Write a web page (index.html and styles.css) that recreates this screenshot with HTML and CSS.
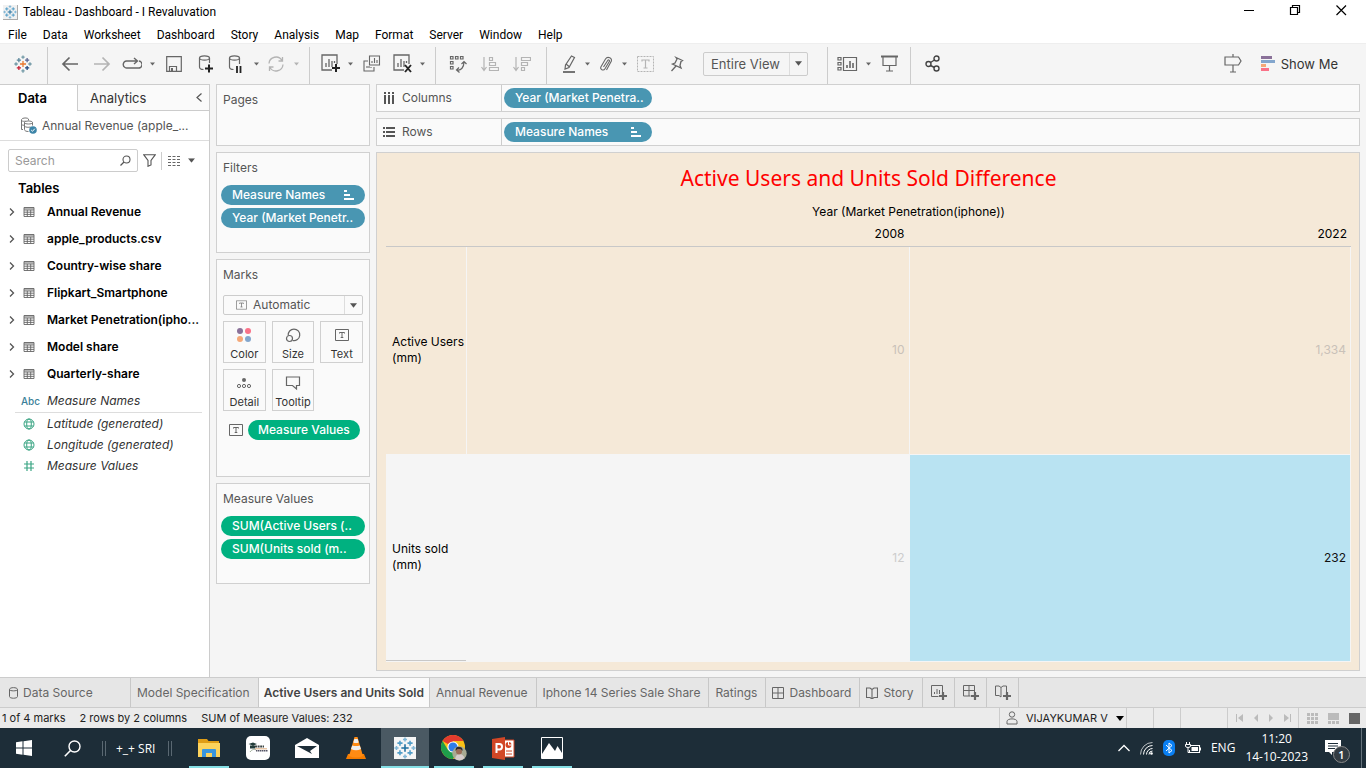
FILE: index.html
```html
<!DOCTYPE html>
<html lang="en">
<head>
<meta charset="utf-8">
<title>Tableau - Dashboard - I Revaluvation</title>
<link rel="stylesheet" href="styles.css">
</head>
<body>
<svg class="sprite" aria-hidden="true">
  <symbol id="caret" viewBox="0 0 8 5"><path d="M0 0h8L4 5z" fill="currentColor"/></symbol>
  <symbol id="logo" viewBox="0 0 24 24"><g fill="none" stroke-width="1.700">
    <path class="lg-a" d="M12 8v8M8 12h8"/>
    <path class="lg-b" d="M6.500 4v5.500M3.700 6.700h5.600"/><path class="lg-c" d="M17.500 4v5.500M14.700 6.700h5.600"/>
    <path class="lg-d" d="M6.500 14.500V20M3.700 17.300h5.600"/><path class="lg-e" d="M17.500 14.500V20M14.700 17.300h5.600"/>
    <path class="lg-f" d="M12 .5v4.500M9.800 2.700h4.400"/><path class="lg-g" d="M12 19v4.500M9.800 21.300h4.400"/>
    <path class="lg-h" d="M2.700 9.800v4.400M.5 12H5"/><path class="lg-i" d="M21.300 9.800v4.400M19 12h4.500"/></g></symbol>
  <symbol id="plus" viewBox="0 0 8 8"><path d="M4 0v8M0 4h8" stroke="currentColor" stroke-width="2.200"/></symbol>
  <symbol id="tbl" viewBox="0 0 12 12"><path d="M1 1.500h10v9H1zM1 4h10M1 6.200h10M1 8.400h10M4.300 4v6.500M7.700 4v6.500" fill="none" stroke="currentColor" stroke-width=".9"/><path d="M1 1.500h10v2H1z" fill="currentColor" opacity=".5"/></symbol>
  <symbol id="chev" viewBox="0 0 6 8"><path d="M1 .5 4.500 4 1 7.500" fill="none" stroke="currentColor" stroke-width="1.300"/></symbol>
  <symbol id="globe" viewBox="0 0 12 12"><g fill="none" stroke="currentColor"><circle cx="6" cy="6" r="5"/><ellipse cx="6" cy="6" rx="2.300" ry="5"/><path d="M1.500 4h9M1.500 8h9"/></g></symbol>
  <symbol id="tbox" viewBox="0 0 14 12"><path d="M.5.5h13v11H.5z" fill="none" stroke="currentColor"/><path d="M4.500 4.500V3.500h5v1M7 3.500v5M5.700 8.500h2.600" fill="none" stroke="currentColor"/></symbol>
  <symbol id="sort" viewBox="0 0 10 10"><path d="M0 0h3v2H0zM0 4h6v2H0zM0 8h10v2H0z" fill="currentColor"/></symbol>
  <symbol id="sheet" viewBox="0 0 18 18"><path d="M11 16H1V1h15v9M5 13v-4M8 13V5M11 13V7M13.500 9V7" fill="none" stroke="currentColor" stroke-width="1.300"/></symbol>
  <symbol id="grid4" viewBox="0 0 12 12"><path d="M.5.5h11v11H.5zM6 .5v11M.5 6h11" fill="none" stroke="currentColor"/></symbol>
  <symbol id="book" viewBox="0 0 12 12"><path d="M6 2.500 4 1H.5v9.500H4L6 12l2-1.500h3.500V1H8L6 2.500V12" fill="none" stroke="currentColor" stroke-width="1.100"/></symbol>
</svg>

<header class="titlebar">
  <svg class="app-logo logo-blue" viewBox="0 0 24 24"><use href="#logo"/></svg>
  <h1 class="window-title">Tableau - Dashboard - I Revaluvation</h1>
  <div class="window-controls">
    <button aria-label="Minimize"><svg width="12" height="12" viewBox="0 0 12 12"><path d="M1 6.500h10" stroke="#000"/></svg></button>
    <button aria-label="Restore"><svg width="12" height="12" viewBox="0 0 12 12"><path d="M3.500 3V1.500h7v7H9M1.500 3.500h7v7h-7z" fill="none" stroke="#000" stroke-width="1.200"/></svg></button>
    <button aria-label="Close"><svg width="12" height="12" viewBox="0 0 12 12"><path d="m1.500 1.500 9.500 9.500M11 1.500 1.500 11" stroke="#000" stroke-width="1.200"/></svg></button>
  </div>
</header>
<nav class="menubar">
  <button>File</button><button>Data</button><button>Worksheet</button><button>Dashboard</button><button>Story</button><button>Analysis</button><button>Map</button><button>Format</button><button>Server</button><button>Window</button><button>Help</button>
</nav>

<div class="toolbar" role="toolbar" aria-label="Main toolbar">
  <div class="group group-start"><button class="tool" aria-label="Start page"><svg class="logo-multi" width="18" height="18" viewBox="0 0 24 24"><use href="#logo"/></svg></button></div>
  <div class="group">
    <button class="tool" aria-label="Undo"><svg width="18" height="16" viewBox="0 0 18 16"><path d="M17 8H2M8.500 1.500 2 8l6.500 6.500" fill="none" stroke="#666" stroke-width="1.700"/></svg></button>
    <button class="tool off" aria-label="Redo"><svg width="18" height="16" viewBox="0 0 18 16"><path d="M1 8h15M9.500 1.500 16 8l-6.500 6.500" fill="none" stroke="currentColor" stroke-width="1.700"/></svg></button>
    <button class="tool split" aria-label="Replay"><svg width="20" height="14" viewBox="0 0 20 14"><path d="M3 10.500A3.500 3.500 0 0 1 4.500 4H15M12 1l3.500 3L12 7M17 4a3.500 3.500 0 0 1-1 7H5a3 3 0 0 1-2-.5" fill="none" stroke="currentColor" stroke-width="1.400"/></svg></button><button class="drop" aria-label="Replay options"><svg><use href="#caret"/></svg></button>
    <button class="tool" aria-label="Save"><svg width="16" height="16" viewBox="0 0 16 16"><path d="M.7.7h14.600v14.600H.7zM3.500 15v-4.500h7V15" fill="none" stroke="currentColor" stroke-width="1.200"/><path d="M5 12h2v3H5z" fill="currentColor"/></svg></button>
    <button class="tool" aria-label="New data source"><svg width="16" height="18" viewBox="0 0 16 18"><g fill="none" stroke="currentColor" stroke-width="1.200"><ellipse cx="6.500" cy="3" rx="5" ry="2.200"/><path d="M1.500 3v9c0 1.500 2 2.500 4 2.500M11.500 3v5"/></g><path d="M11 9.500v8M7 13.500h8" stroke="#222" stroke-width="2"/></svg></button>
    <button class="tool split" aria-label="Pause updates"><svg width="16" height="18" viewBox="0 0 16 18"><g fill="none" stroke="currentColor" stroke-width="1.200"><ellipse cx="6.500" cy="3" rx="5" ry="2.200"/><path d="M1.500 3v9c0 1.500 2 2.500 4 2.500M11.500 3v6"/></g><path d="M9 11v7M12.500 11v7" stroke="#222" stroke-width="1.800"/></svg></button><button class="drop" aria-label="Pause options"><svg><use href="#caret"/></svg></button>
    <button class="tool split off" aria-label="Refresh"><svg width="18" height="16" viewBox="0 0 18 16"><path d="M2 7.500a7 7 0 0 1 13-3M16 8.500a7 7 0 0 1-13 3M15.500 1v4h-4M2.500 15v-4h4" fill="none" stroke="currentColor" stroke-width="1.300"/></svg></button><button class="drop off" aria-label="Refresh options"><svg><use href="#caret"/></svg></button>
  </div>
  <div class="group">
    <button class="tool split" aria-label="New worksheet"><svg width="19" height="19" viewBox="0 0 19 19"><use href="#sheet" width="18" height="18"/><path d="M15 10v8M11 14h8" stroke="#222" stroke-width="2"/></svg></button><button class="drop" aria-label="New worksheet options"><svg><use href="#caret"/></svg></button>
    <button class="tool" aria-label="Duplicate"><svg width="18" height="17" viewBox="0 0 18 17"><path d="M6.500 1h10v9h-10zM5 6H1v10h10v-4M9 8V6M11.500 8V3M14 8V5M4 13v-2M6 13v-2M8 13v-1" fill="none" stroke="currentColor" stroke-width="1.100"/></svg></button>
    <button class="tool split" aria-label="Clear sheet"><svg width="19" height="19" viewBox="0 0 19 19"><use href="#sheet" width="18" height="18"/><path d="m12 11 6 7M18 11l-6 7" stroke="#222" stroke-width="1.900"/></svg></button><button class="drop" aria-label="Clear options"><svg><use href="#caret"/></svg></button>
  </div>
  <div class="group group-sort">
    <button class="tool" aria-label="Swap rows and columns"><svg width="18" height="18" viewBox="0 0 18 18"><path d="M1.500 1.500h2.500V4H1.500zM6.500 1.500H9V4H6.500zM11.500 1.500H14V4h-2.500zM1.500 6.500h2.500V9H1.500zM1.500 11.500h2.500V14H1.500zM8 15c4 1 7-3 7-8M12.500 9 15 6.500 17.500 9M10 12.500 7.500 15l3 2.500" fill="none" stroke="currentColor" stroke-width="1.200"/></svg></button>
    <button class="tool off" aria-label="Sort ascending"><svg width="18" height="16" viewBox="0 0 18 16"><path d="M3 1v13M.5 11 3 14.500 5.500 11M8.500 1.500h3v3h-3zM8.500 6.500h6v3h-6zM8.500 11.500h9v3h-9z" fill="none" stroke="currentColor" stroke-width="1.200"/></svg></button>
    <button class="tool off" aria-label="Sort descending"><svg width="18" height="16" viewBox="0 0 18 16"><path d="M3 1v13M.5 11 3 14.500 5.500 11M8.500 1.500h9v3h-9zM8.500 6.500h6v3h-6zM8.500 11.500h3v3h-3z" fill="none" stroke="currentColor" stroke-width="1.200"/></svg></button>
  </div>
  <div class="group group-format">
    <button class="tool split" aria-label="Highlight"><svg width="14" height="18" viewBox="0 0 14 18"><path d="m9.500 1 3 1.500L7 12.500l-4 1.500.5-4zM4 9l3 2.500" fill="none" stroke="currentColor" stroke-width="1.200"/><path d="M1 17h12" stroke="currentColor" stroke-width="1.800"/></svg></button><button class="drop" aria-label="Highlight options"><svg><use href="#caret"/></svg></button>
    <button class="tool split" aria-label="Group members"><svg width="14" height="16" viewBox="0 0 14 16"><path d="M4.500 11 8.700 4.500c.8-1.200 2.300-.2 1.600 1L6 12.700c-1.500 2.500-5.500.8-4-2L6.500 3c2-3.300 7.500-1 5.500 2.800L7.500 14" fill="none" stroke="currentColor" stroke-width="1.100"/></svg></button><button class="drop" aria-label="Group options"><svg><use href="#caret"/></svg></button>
    <button class="tool off" aria-label="Show mark labels"><svg width="17" height="16" viewBox="0 0 17 16"><path d="M.5.5h16v15H.5z" fill="none" stroke="currentColor" stroke-dasharray="2 1"/><path d="M5 5.500V4h7v1.500M8.500 4v8M6.500 12h4" fill="none" stroke="currentColor" stroke-width="1.200"/></svg></button>
    <button class="tool" aria-label="Fix axes"><svg width="14" height="16" viewBox="0 0 14 16"><path d="m6 1.500 6.500 3-1.500 1L10 9.500l1 2.500-8.500-4L5 7l2-4zM6 10l-4.500 5" fill="none" stroke="currentColor" stroke-width="1.300"/></svg></button>
    <label class="picker picker-fit"><select aria-label="Fit"><option>Entire View</option></select><svg class="picker-caret"><use href="#caret"/></svg></label>
  </div>
  <div class="group group-cards">
    <button class="tool split" aria-label="Show or hide cards"><svg width="21" height="16" viewBox="0 0 21 16"><path d="M1 1.500h3V4H1zM1 6.500h3V9H1zM1 11.500h3V14H1zM6.500 1.500h13v13h-13z" fill="none" stroke="currentColor" stroke-width="1.200"/><path d="M10 12V9M13 12V5M16 12V7" stroke="currentColor" stroke-width="1.600"/></svg></button><button class="drop" aria-label="Card options"><svg><use href="#caret"/></svg></button>
    <button class="tool split" aria-label="Presentation mode"><svg width="17" height="17" viewBox="0 0 17 17"><path d="M0 1.500h17" stroke="currentColor" stroke-width="2"/><path d="M2 2v8.500h13V2M8.500 10.500V16M5 16h7" fill="none" stroke="currentColor" stroke-width="1.200"/></svg></button>
  </div>
  <div class="group">
    <button class="tool" aria-label="Share"><svg width="16" height="17" viewBox="0 0 16 17"><g fill="none" stroke="#444" stroke-width="1.400"><circle cx="3.500" cy="9" r="2.500"/><circle cx="11.500" cy="3.500" r="2.500"/><circle cx="11.500" cy="13.500" r="2.500"/><path d="m5.500 7.500 4-2.500M5.500 10.500l4 2"/></g></svg></button>
  </div>
  <div class="group group-end">
    <button class="tool" aria-label="Guide"><svg width="18" height="19" viewBox="0 0 18 19"><path d="M9 0v3M9 11v7M6 18h6M1 3h13.500L17 7l-2.500 4H1z" fill="none" stroke="#666" stroke-width="1.200"/></svg></button>
    <button class="showme"><svg width="15" height="15" viewBox="0 0 15 15"><path d="M0 0h11v3H0z" fill="#8a7199"/><path d="M0 4h14v3H0z" fill="#83a6cd"/><path d="M0 8h5v3H0z" fill="#f5a878"/><path d="M0 12h8v3H0z" fill="#fa7288"/></svg>Show Me</button>
  </div>
</div>

<main class="workspace">
  <aside class="datapane">
    <div class="pane-tabs"><button class="pane-tab current">Data</button><button class="pane-tab">Analytics<svg width="6" height="9" viewBox="0 0 6 9"><path d="M5.500.5 1 4.500l4.500 4" fill="none" stroke="#555" stroke-width="1.200"/></svg></button></div>
    <button class="source"><svg width="17" height="17" viewBox="0 0 17 17"><g fill="none" stroke="#777"><path d="M3 12.500H1.500v-10C2 .5 8 .5 8.500 2v1.500M1.500 3.500c1 1 3 1 4 .5M1.500 7.500c1 .8 2 .8 3 .6"/><path d="M4.500 5.500c0-2 8-2 8 0s-8 2-8 0v7c0 1.500 2 2 4 2M12.500 5.500v3M4.500 9c1 1.500 4 1.500 6 1"/></g><circle cx="13" cy="13" r="3.800" fill="#3d85a8"/><path d="m11.200 13 1.300 1.300 2.300-2.600" fill="none" stroke="#fff"/></svg>Annual Revenue (apple_...</button>
    <div class="search-row">
      <label class="search"><input type="text" placeholder="Search" aria-label="Search fields"><svg width="11" height="11" viewBox="0 0 11 11"><circle cx="6.500" cy="4.500" r="3.500" fill="none" stroke="#555" stroke-width="1.100"/><path d="m4 7-3.500 3.500" stroke="#555" stroke-width="1.200"/></svg></label>
      <button class="plain" aria-label="Filter fields"><svg width="13" height="13" viewBox="0 0 13 13"><path d="M.7.7h11.600L8 6.500V11l-3 1.300V6.500z" fill="none" stroke="#555" stroke-width="1.100"/></svg></button>
      <button class="plain viewmode" aria-label="View options"><svg width="12" height="10" viewBox="0 0 12 10"><path d="M0 .5h12M0 3.500h12M0 6.500h12M0 9.500h12" stroke="#666" stroke-dasharray="3 1.500"/></svg><svg width="7" height="5" viewBox="0 0 8 5"><use href="#caret"/></svg></button>
    </div>
    <h2 class="tables-head">Tables</h2>
    <ul class="fields">
      <li><svg class="chev"><use href="#chev"/></svg><svg class="kind"><use href="#tbl"/></svg>Annual Revenue</li>
      <li><svg class="chev"><use href="#chev"/></svg><svg class="kind"><use href="#tbl"/></svg>apple_products.csv</li>
      <li><svg class="chev"><use href="#chev"/></svg><svg class="kind"><use href="#tbl"/></svg>Country-wise share</li>
      <li><svg class="chev"><use href="#chev"/></svg><svg class="kind"><use href="#tbl"/></svg>Flipkart_Smartphone</li>
      <li><svg class="chev"><use href="#chev"/></svg><svg class="kind"><use href="#tbl"/></svg>Market Penetration(ipho...</li>
      <li><svg class="chev"><use href="#chev"/></svg><svg class="kind"><use href="#tbl"/></svg>Model share</li>
      <li><svg class="chev"><use href="#chev"/></svg><svg class="kind"><use href="#tbl"/></svg>Quarterly-share</li>
    </ul>
    <ul class="fields generated">
      <li class="names"><span class="abc">Abc</span><em>Measure Names</em></li>
      <li><svg class="kind green"><use href="#globe"/></svg><em>Latitude (generated)</em></li>
      <li><svg class="kind green"><use href="#globe"/></svg><em>Longitude (generated)</em></li>
      <li><svg class="kind green" viewBox="0 0 12 12"><path d="M4 1v10M8 1v10M1 4h10M1 8h10" stroke="currentColor" stroke-width="1.200"/></svg><em>Measure Values</em></li>
    </ul>
  </aside>

  <section class="cards">
    <section class="card card-pages"><h2>Pages</h2></section>
    <section class="card card-pills"><h2>Filters</h2>
      <div class="pills"><button class="pill">Measure Names<svg class="sort"><use href="#sort"/></svg></button><button class="pill">Year (Market Penetr..</button></div>
    </section>
    <section class="card card-marks"><h2>Marks</h2>
      <label class="picker picker-mark"><svg class="picker-icon" viewBox="0 0 14 12"><use href="#tbox"/></svg><select aria-label="Mark type"><option>Automatic</option></select><svg class="picker-caret"><use href="#caret"/></svg></label>
      <div class="marks">
        <button><svg width="16" height="16" viewBox="0 0 16 16"><circle cx="4" cy="4" r="3" fill="#8a7199"/><circle cx="12" cy="4" r="3" fill="#fa7288"/><circle cx="4" cy="12" r="3" fill="#f5a878"/><circle cx="12" cy="12" r="3" fill="#83a6cd"/></svg>Color</button>
        <button><svg width="16" height="16" viewBox="0 0 16 16"><g fill="none" stroke="#666" stroke-width="1.200"><path d="M3.200 8.500a5.800 5.800 0 1 1 4.500 5"/><circle cx="4.500" cy="11.500" r="3"/></g></svg>Size</button>
        <button><svg class="gray" width="14" height="16" viewBox="0 0 14 12"><use href="#tbox"/></svg>Text</button>
        <button><svg width="16" height="16" viewBox="0 0 16 16"><circle cx="8" cy="5" r="2" fill="#666"/><g fill="none" stroke="#666"><circle cx="3" cy="11" r="1.600"/><circle cx="8" cy="11" r="1.600"/><circle cx="13" cy="11" r="1.600"/></g></svg>Detail</button>
        <button><svg width="16" height="16" viewBox="0 0 16 16"><path d="M1.500 2h13v8.500h-3v3.500l-4-3.500h-6z" fill="none" stroke="#666" stroke-width="1.200"/></svg>Tooltip</button>
      </div>
      <div class="mark-field"><svg width="14" height="12" viewBox="0 0 14 12"><use href="#tbox"/></svg><button class="pill measure">Measure Values</button></div>
    </section>
    <section class="card card-pills"><h2>Measure Values</h2>
      <div class="pills"><button class="pill measure">SUM(Active Users (..</button><button class="pill measure">SUM(Units sold (m..</button></div>
    </section>
  </section>

  <section class="sheet">
    <div class="shelf"><h2><svg width="12" height="12" viewBox="0 0 12 12"><path d="M2 0v2M2 3v9M6 0v2M6 3v9M10 0v2M10 3v9" stroke="#555" stroke-width="2"/></svg>Columns</h2><button class="pill">Year (Market Penetra..</button></div>
    <div class="shelf"><h2><svg width="12" height="12" viewBox="0 0 12 12"><path d="M0 2h2M3 2h9M0 6h2M3 6h9M0 10h2M3 10h9" stroke="#555" stroke-width="2"/></svg>Rows</h2><button class="pill">Measure Names<svg class="sort"><use href="#sort"/></svg></button></div>
    <div class="viz">
      <h2 class="viz-title">Active Users and Units Sold Difference</h2>
      <table class="crosstab">
        <caption>Year (Market Penetration(iphone))</caption>
        <thead><tr><td></td><th scope="col">2008</th><th scope="col">2022</th></tr></thead>
        <tbody>
          <tr><th scope="row">Active Users (mm)</th><td>10</td><td>1,334</td></tr>
          <tr class="band"><th scope="row">Units sold (mm)</th><td>12</td><td class="selected">232</td></tr>
        </tbody>
      </table>
    </div>
  </section>
</main>

<nav class="sheet-tabs">
  <button class="tab tab-source"><svg width="9" height="12" viewBox="0 0 9 12"><path d="M.5 2.500v7c0 2.300 8 2.300 8 0v-7c0-2.500-8-2.500-8 0 0 1.800 8 1.800 8 0" fill="none" stroke="currentColor"/></svg>Data Source</button>
  <button class="tab">Model Specification</button>
  <button class="tab current">Active Users and Units Sold</button>
  <button class="tab">Annual Revenue</button>
  <button class="tab">Iphone 14 Series Sale Share</button>
  <button class="tab">Ratings</button>
  <button class="tab"><svg width="12" height="12"><use href="#grid4"/></svg>Dashboard</button>
  <button class="tab"><svg width="12" height="12"><use href="#book"/></svg>Story</button>
  <button class="tab tab-new" aria-label="New worksheet"><svg width="16" height="15" viewBox="0 0 16 15"><path d="M7.500 11.500H.5V.5h11v7M3.500 9V7M6 9V4M8.500 9V5" fill="none" stroke="currentColor"/><use href="#plus" x="8" y="7" width="8" height="8"/></svg></button>
  <button class="tab tab-new" aria-label="New dashboard"><svg width="16" height="15" viewBox="0 0 16 15"><path d="M7.500 11H.5V.5h11v7M6 .5V11M.5 5.500h11" fill="none" stroke="currentColor"/><use href="#plus" x="8" y="7" width="8" height="8"/></svg></button>
  <button class="tab tab-new" aria-label="New story"><svg width="16" height="15" viewBox="0 0 16 15"><path d="M6 12 4 10.500H.5V1H4l2 1.500L8 1h3.500v6M6 2.500V12" fill="none" stroke="currentColor"/><use href="#plus" x="8" y="7" width="8" height="8"/></svg></button>
</nav>

<footer class="status">
  <span>1 of 4 marks</span><span>2 rows by 2 columns</span><span>SUM of Measure Values: 232</span>
  <div class="cells">
    <button class="cell user"><svg width="12" height="14" viewBox="0 0 12 14"><g fill="none" stroke="#666"><circle cx="6" cy="3.500" r="2.700"/><path d="M1 13v-2.500C1 7 11 7 11 10.500V13z"/></g></svg>VIJAYKUMAR V<svg class="user-caret" width="8" height="5"><use href="#caret"/></svg></button>
    <span class="cell cell-small"></span><span class="cell cell-small"></span><span class="cell cell-wide"></span>
    <span class="cell pager">
      <button aria-label="First"><svg width="7" height="8" viewBox="0 0 7 8"><path d="M.5 0v8" stroke="currentColor"/><path d="M7 0v8L2 4z" fill="currentColor"/></svg></button>
      <button aria-label="Previous"><svg width="7" height="8" viewBox="0 0 7 8"><path d="M6 0v8L2 4z" fill="currentColor"/></svg></button>
      <button aria-label="Next"><svg width="7" height="8" viewBox="0 0 7 8"><path d="M1 0v8l4-4z" fill="currentColor"/></svg></button>
      <button aria-label="Last"><svg width="7" height="8" viewBox="0 0 7 8"><path d="M6.500 0v8" stroke="currentColor"/><path d="M0 0v8l5-4z" fill="currentColor"/></svg></button>
    </span>
    <span class="cell views">
      <button aria-label="Sheet sorter"><svg width="11" height="11" viewBox="0 0 11 11"><path d="M0 0h3v3H0zM4 0h3v3H4zM8 0h3v3H8zM0 4h3v3H0zM4 4h3v3H4zM8 4h3v3H8zM0 8h3v3H0zM4 8h3v3H4zM8 8h3v3H8z" fill="#bbb"/></svg></button>
      <button aria-label="Filmstrip"><svg width="11" height="11" viewBox="0 0 11 11"><path d="M0 0h11v7H0zM0 8h3v3H0zM4 8h3v3H4zM8 8h3v3H8z" fill="#bbb"/></svg></button>
      <button aria-label="Tabs"><svg width="11" height="11" viewBox="0 0 11 11"><path d="M0 0h11v11H0z" fill="#666"/></svg></button>
    </span>
  </div>
</footer>

<div class="taskbar">
  <button class="app" aria-label="Start"><svg width="16" height="16" viewBox="0 0 16 16"><path d="m0 2.200 6.500-.9v6.200H0zM7.500 1.200 16 0v7.500H7.500zM0 8.500h6.500v6.200L0 13.800zM7.500 8.500H16V16l-8.500-1.200z" fill="#fff"/></svg></button>
  <button class="app" aria-label="Search"><svg width="17" height="17" viewBox="0 0 17 17"><circle cx="10.500" cy="6.500" r="5.500" fill="none" stroke="#fff" stroke-width="1.400"/><path d="M6.500 10.500.8 16.200" stroke="#fff" stroke-width="1.600"/></svg></button>
  <div class="deskband">+_+ SRI</div>
  <div class="apps">
    <button class="app open" aria-label="File Explorer"><svg width="22" height="19" viewBox="0 0 22 19"><path d="M0 0h9l1.500 2H21v5H0z" fill="#e09d16"/><path d="M0 4h22v14H0z" fill="#fdd35c"/><path d="M4 18v-7q0-1 1-1h12q1 0 1 1v7h-4v-4H8v4z" fill="#3a96dd"/></svg></button>
    <button class="app" aria-label="Course notes"><svg width="24" height="24" viewBox="0 0 24 24"><rect width="24" height="24" rx="5" fill="#fff"/><path d="m2.500 8 4.500-1.500L11 8 7 9.500zM4 9.500h5v3H4z" fill="#223c3a"/><path d="M9 10.500h9" stroke="#3d4543" stroke-width="2" stroke-dasharray="2 .6"/><path d="M9 12.800h12" stroke="#d79a62" stroke-width=".8"/><path d="M4 16c2-3 5-3 6-2" fill="none" stroke="#8a9a80" stroke-width=".8"/><path d="M10 14.800h12" stroke="#556" stroke-width="1.500" stroke-dasharray="1.500 .5"/></svg></button>
    <button class="app" aria-label="Mail"><svg width="24" height="20" viewBox="0 0 24 20"><path d="M0 7 12 0l12 7v13H0z" fill="#fff"/><path d="M2 8h20l-7 5 2 3z" fill="#1d2d38"/></svg></button>
    <button class="app" aria-label="VLC"><svg width="20" height="23" viewBox="0 0 20 23"><path d="M2 17h16l2 5H0z" fill="#f57c00"/><path d="M8.500 0h3L17 19q-7 3-14 0z" fill="#ff8b13"/><path d="m7.300 5.500 1-3.500h3.400l1 3.500q-2.700 1-5.400 0zM5 12l1.200-3.500q3.800 1.200 7.600 0L15 12q-5 2.500-10 0z" fill="#eee"/></svg></button>
    <button class="app active" aria-label="Tableau"><svg class="logo-blue tableau-tile" width="22" height="22" viewBox="0 0 24 24"><use href="#logo"/></svg></button>
    <button class="app open" aria-label="Chrome"><svg width="26" height="26" viewBox="0 0 26 26"><circle cx="12" cy="12" r="12" fill="#fbc116"/><path d="M12 12 1.600 6A12 12 0 0 1 22.400 6H12z" fill="#e33b2e"/><path d="M12 12 7 15 1.600 6A12 12 0 0 0 12 24l5-9z" fill="#1f9e4b"/><circle cx="12" cy="12" r="5.600" fill="#fff"/><circle cx="12" cy="12" r="4.500" fill="#2f7de9"/><circle cx="18.500" cy="18.500" r="7.200" fill="#a7aa93"/><path d="M14 24q1-5 4.500-5t5 4q-4 4-9.500 1z" fill="#d5cbcb"/><circle cx="18" cy="16.500" r="3" fill="#9b6d58"/><path d="M14.500 16q0-5 4-4 3.500 0 3 4l-2-2h-3z" fill="#302d2d"/></svg></button>
    <button class="app open" aria-label="PowerPoint"><svg width="23" height="23" viewBox="0 0 23 23"><path d="M10 3h12v17H10z" fill="#fff" stroke="#d24625"/><path d="M0 2 13 0v23L0 21z" fill="#d24726"/><path d="M4.500 16V7h3q2.500 0 2.500 2.700t-2.500 2.800h-3" fill="none" stroke="#fff" stroke-width="2"/><circle cx="16.500" cy="8" r="3" fill="#d24625"/><path d="M16.500 4v4h4" fill="none" stroke="#fff"/><path d="M14 14h6M14 17h6" stroke="#d24625"/></svg></button>
    <button class="app open" aria-label="Photos"><svg width="22" height="22" viewBox="0 0 22 22"><path d="M.5.5h21v21H.5z" fill="none" stroke="#fff"/><path d="M1 17 8 6l6 8 2.500-5L21 16v5H1z" fill="#fff"/></svg></button>
  </div>
  <div class="tray">
    <button aria-label="Hidden icons"><svg width="12" height="8" viewBox="0 0 12 8"><path d="m.5 7 5.500-5.500L11.500 7" fill="none" stroke="#fff" stroke-width="1.300"/></svg></button>
    <button aria-label="Network"><svg width="13" height="13" viewBox="0 0 13 13"><g fill="none" stroke="#fff"><path d="M.5 12.500a12 12 0 0 1 12-12" opacity=".7"/><path d="M3.500 12.500a9 9 0 0 1 9-9M6.500 12.500a6 6 0 0 1 6-6M9 12.500a3.500 3.500 0 0 1 3.500-3.500"/></g><circle cx="11.500" cy="11.500" r="1.300" fill="#fff"/></svg></button>
    <button aria-label="Bluetooth"><svg width="12" height="16" viewBox="0 0 12 16"><rect width="12" height="16" rx="5" fill="#0a7ff2"/><path d="m3 5 6 5.500L6 13V3l3 2.500L3 11" fill="none" stroke="#fff"/></svg></button>
    <button aria-label="Battery"><svg width="16" height="12" viewBox="0 0 16 12"><path d="M5 3.500h9.500v7h-10V8M15.500 5.500v3" fill="none" stroke="#fff" stroke-width="1.100"/><path d="M6.500 5H13v4H6.500z" fill="#fff"/><path d="M1.500 0v2M4.500 0v2M.5 2.500h5V4q0 1.500-2.500 1.500T.5 4zM3 5.500v5h2" fill="none" stroke="#fff"/></svg></button>
    <button class="lang">ENG</button>
    <div class="clock"><span>11:20</span><span>14-10-2023</span></div>
    <button class="notify" aria-label="1 notification"><svg width="16" height="16" viewBox="0 0 16 16"><path d="M0 0h16v12H7v3l-3-3H0z" fill="#fff"/><path d="M3 3.500h10M3 6h10M3 8.500h7" stroke="#1d2d38"/></svg><span class="badge">1</span></button>
  </div>
</div>
</body>
</html>
```
FILE: styles.css
```css
* { box-sizing: border-box; }
body {
  margin: 0;
  height: 100vh;
  display: flex;
  flex-direction: column;
  background: #f5f5f5;
  color: #222;
  font: 12px/16px Inter, "Liberation Sans", sans-serif;
  overflow: hidden;
}
button, input, select { font: inherit; color: inherit; }
button { background: none; border: 0; padding: 0; margin: 0; white-space: nowrap; }
h1, h2, ul { margin: 0; padding: 0; font-size: inherit; font-weight: 400; }
ul { list-style: none; }
svg { display: block; flex: none; }
.sprite { position: absolute; width: 0; height: 0; }

/* Tableau mark palettes */
.logo-blue { --a: #1f6f9f; --b: #4f9cc7; --f: #7fb6d6; --c: #4f9cc7; --d: #4f9cc7; --e: #4f9cc7; }
.logo-multi { --a: #e8762c; --b: #5b879b; --c: #5b6591; --d: #c72035; --e: #1f457e; --f: #7199a6; }
.lg-a { stroke: var(--a); }
.lg-b { stroke: var(--b); }
.lg-c { stroke: var(--c); }
.lg-d { stroke: var(--d); }
.lg-e { stroke: var(--e); }
.lg-f, .lg-g, .lg-h, .lg-i { stroke: var(--f); }

/* Window chrome */
.titlebar { flex: none; height: 24px; display: flex; align-items: center; background: #fff; padding-left: 3px; font-family: Roboto, sans-serif; color: #000; }
.app-logo { width: 15px; height: 15px; background: #f1f1f1; border-right: 1px solid #aaa; border-bottom: 1px solid #aaa; }
.window-title { margin-left: 5px; }
.window-controls { margin: 0 2px 4px auto; display: flex; }
.window-controls button { width: 46px; display: flex; justify-content: center; }
.menubar { flex: none; height: 19px; display: flex; gap: 16px; background: #fff; padding: 2px 8px 0; font-family: Roboto, sans-serif; color: #000; }

/* Toolbar */
.toolbar { flex: none; height: 41px; display: flex; border-top: 1px solid #eee; color: #666; }
.group { display: flex; align-items: center; padding: 0 7px 4px 6px; border-left: 1px solid #ccc; margin-top: 3px; }
.group-start { border-left: 0; padding-left: 7px; padding-right: 8px; }
.group-sort { padding-right: 8px; }
.group-format { padding-left: 8px; padding-right: 19px; }
.group-format .drop { width: 9px; }
.group-cards { padding-left: 5px; }
.group-end { border: 0; margin-left: auto; padding-right: 28px; }
.tool { width: 32px; height: 32px; display: flex; align-items: center; justify-content: center; }
.tool.split { width: 28px; }
.drop { width: 12px; height: 32px; display: flex; align-items: center; justify-content: center; }
.drop svg { width: 5px; height: 4px; }
.group-cards .drop { width: 14px; }
.off { color: #b4b4b4; }
.showme { display: flex; align-items: center; gap: 5px; font-size: 13px; color: #333; margin-left: 12px; }
.picker { position: relative; display: flex; align-items: center; border: 1px solid #ccc; border-radius: 2px; color: #555; }
.picker select { appearance: none; width: 100%; height: 100%; border: 0; background: none; padding: 0 0 0 7px; }
.picker::after { content: ""; position: absolute; right: 17px; top: 0; bottom: 0; border-left: 1px solid #ddd; }
.picker-caret { position: absolute; right: 5px; width: 7px; height: 5px; }
.picker-icon { position: absolute; left: 12px; width: 11px; height: 10px; opacity: .8; }
.picker-fit { width: 105px; height: 24px; margin-left: 10px; font-size: 13px; }
.picker-mark { height: 20px; margin: 0 6px; }
.picker-mark select { padding-left: 29px; }

/* Workspace */
.workspace { flex: 1; min-height: 0; display: flex; gap: 6px; padding-right: 6px; }
.datapane { flex: none; width: 210px; background: #fff; border: solid #ccc; border-width: 1px 1px 0 0; color: #000; }
.pane-tabs { display: flex; height: 26px; font-size: 13px; }
.pane-tab { width: 77px; color: #333; }
.pane-tab + .pane-tab { flex: 1; display: flex; align-items: center; justify-content: space-between; padding: 0 7px 0 12px; border: solid #ccc; border-width: 0 0 1px 1px; background: #fafafa; }
.pane-tab.current { padding-right: 12px; font-weight: 600; color: #000; }
.source { width: 100%; height: 30px; display: flex; align-items: center; gap: 5px; padding-left: 20px; color: #555; border-bottom: 1px solid #ddd; }
.search-row { display: flex; align-items: center; gap: 5px; padding: 8px; color: #555; }
.search { width: 130px; height: 23px; display: flex; align-items: center; padding: 0 6px; border: 1px solid #ccc; border-radius: 2px; }
.search input { flex: 1; min-width: 0; border: 0; outline: 0; padding: 0; background: none; }
.search input::placeholder { color: #999; }
.viewmode { display: flex; align-items: center; gap: 8px; height: 18px; padding-left: 6px; border-left: 1px solid #ccc; }
.tables-head { padding-left: 18px; font-weight: 600; font-size: 13px; margin-bottom: 2px; }
.fields li { height: 27px; display: flex; align-items: center; padding-left: 9px; font-weight: 600; white-space: nowrap; }
.chev { width: 6px; height: 8px; color: #555; margin-right: 8px; }
.kind { width: 12px; height: 12px; color: #666; margin-right: 12px; }
.generated { margin: 1px 7px 0 15px; }
.generated li { height: 21px; padding-left: 8px; font-weight: 400; color: #333; }
.generated .names { height: 25px; padding: 2px 0 0 6px; border-bottom: 1px solid #ddd; }
.abc { width: 26px; font-size: 10px; font-weight: 500; color: #3a7f99; }
.kind.green { color: #3ba584; }

/* Cards */
.cards { flex: none; width: 154px; display: flex; flex-direction: column; gap: 6px; }
.card { border: 1px solid #d0d0d0; background: #fafafa; color: #333; }
.card h2 { padding: 7px 6px 0; color: #555; }
.card-pages { height: 62px; }
.card-pills { height: 101px; }
.card-marks { height: 218px; }
.card-marks h2 { padding-bottom: 12px; }
.pills { display: flex; flex-direction: column; gap: 3px; padding: 9px 4px 0; }
.pill { height: 20px; border-radius: 10px; background: #4996b2; color: #fff; padding: 0 11px; display: flex; align-items: center; justify-content: space-between; font-weight: 500; }
.pill.measure { background: #00b180; }
.sort { width: 10px; height: 10px; }
.marks { display: grid; grid-template-columns: repeat(3, 1fr); gap: 6px; padding: 6px; }
.marks button { height: 42px; border: 1px solid #d0d0d0; display: flex; flex-direction: column; align-items: center; gap: 3px; padding-top: 5px; font-size: 11px; }
.gray { color: #666; }
.mark-field { display: flex; align-items: center; gap: 5px; padding: 3px 10px 0 12px; color: #666; }
.mark-field .pill { padding: 0 10px; }

/* Sheet */
.sheet { flex: 1; min-width: 0; display: flex; flex-direction: column; gap: 6px; padding-bottom: 6px; }
.shelf { flex: none; height: 28px; display: flex; align-items: center; border: 1px solid #d0d0d0; background: #fafafa; color: #555; }
.shelf h2 { width: 125px; height: 100%; display: flex; align-items: center; gap: 7px; padding-left: 6px; border-right: 1px solid #ccc; margin-right: 2px; }
.shelf .pill { width: 148px; }
.viz { flex: 1; min-height: 0; display: flex; flex-direction: column; background: #f5e9d8; border: 1px solid #d0d0d0; padding: 11px 8px 8px 9px; color: #000; }
.viz-title { text-align: center; color: #f00; font: 21px/28px "Noto Sans", sans-serif; margin-bottom: 12px; }
.crosstab { flex: 1; display: flex; flex-direction: column; }
.crosstab caption { display: block; padding-left: 80px; text-align: center; line-height: 16px; }
.crosstab tr { flex: 1; display: grid; grid-template-columns: 80px 1fr 1fr; }
.crosstab thead { display: block; border-bottom: 1px solid #c8c8c8; }
.crosstab tbody { flex: 1; display: flex; flex-direction: column; }
.crosstab th, .crosstab td { display: flex; align-items: center; justify-content: flex-end; padding: 0 4px; font-weight: 400; }
.crosstab thead th { height: 26px; padding-top: 2px; }
.crosstab tbody th { justify-content: flex-start; padding: 0 0 0 6px; text-align: left; }
.crosstab tbody td { color: #c9c1b8; border-left: 1px solid #f5f5f5; }
.crosstab tbody td:last-child { border-right: 1px solid #f5f5f5; }
.crosstab tbody tr { border-bottom: 1px solid #f5f5f5; }
.crosstab .band { background: #f5f5f5; }
.crosstab .band th { border-bottom: 1px solid #c8c8c8; }
.crosstab .band td { color: #ccc; }
.crosstab .band .selected { background: #b9e3f2; color: #111; }

/* Sheet tabs */
.sheet-tabs { flex: none; height: 31px; display: flex; background: #e6e6e6; border: solid #ccc; border-width: 1px 0; color: #666; }
.tab { display: flex; align-items: center; gap: 5px; padding: 0 8px 0 6px; border-right: 1px solid #c8c8c8; }
.tab.current { background: #fafafa; color: #444; font-weight: 600; padding: 0 5px; }
.tab-source { width: 131px; padding-left: 9px; }
.tab-new { width: 32px; padding: 0 8px; }

/* Status bar */
.status { flex: none; height: 20px; display: flex; align-items: center; gap: 14px; padding-left: 2px; background: #ebebeb; font-size: 11px; color: #222; }
.cells { height: 100%; margin-left: auto; display: flex; }
.cell { height: 100%; display: flex; align-items: center; border-left: 1px solid #ccc; }
.cell.user { width: 127px; gap: 8px; padding-left: 6px; }
.user-caret { color: #000; }
.cell-small { width: 27px; }
.cell-wide { width: 47px; }
.pager { width: 71px; gap: 9px; padding-left: 8px; color: #bbb; }
.views { width: 68px; gap: 10px; padding-left: 8px; }

/* Taskbar */
.taskbar { flex: none; height: 40px; display: flex; align-items: center; background: #1d2d38; color: #fff; font-family: "Open Sans", sans-serif; }
.app { position: relative; width: 48px; height: 40px; display: flex; align-items: center; justify-content: center; }
.app.open::after, .app.active::after { content: ""; position: absolute; left: 4px; right: 4px; bottom: 0; height: 2px; background: #85dfe5; }
.app.active { background: #4a5963; }
.app.active::after { left: 0; right: 0; }
.tableau-tile { background: #f5f5f5; }
.deskband { width: 70px; margin: 0 13px 0 6px; padding: 0 0 0 10px; border: double #5a6872; border-width: 0 4px; height: 15px; line-height: 15px; }
.apps { display: flex; gap: 1px; }
.tray { margin-left: auto; display: flex; align-items: center; gap: 10px; }
.clock { display: flex; flex-direction: column; align-items: center; line-height: 18px; }
.notify { position: relative; width: 44px; height: 40px; display: flex; align-items: flex-start; padding: 12px 0 0 7px; border-right: 1px solid #65727b; margin-right: 4px; }
.badge { position: absolute; left: 15px; top: 18px; width: 17px; height: 17px; border: 1px solid #888; border-radius: 50%; background: #333c43; font-size: 11px; font-weight: 600; line-height: 15px; }
```
